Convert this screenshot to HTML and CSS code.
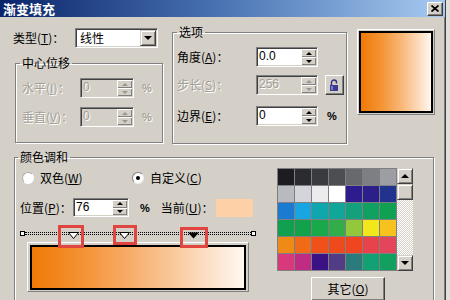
FILE: index.html
```html
<!DOCTYPE html>
<html lang="zh-CN">
<head>
  <meta charset="UTF-8">
  <title>渐变填充</title>
  <link rel="stylesheet" href="styles.css">
</head>
<body>
  <div class="window">
    <!-- Title bar -->
    <div class="titlebar">
      <span class="title">渐变填充</span>
      <span class="close">
        <svg width="8" height="7" viewBox="0 0 8 7"><path d="M0.5 0.5 L7.5 6.5 M7.5 0.5 L0.5 6.5" stroke="#000" stroke-width="1.7"/></svg>
      </span>
    </div>

    <!-- Top part -->
    <div class="top">
      <div class="left-col">
        <div class="type-row">
          <span class="label type-label">类型(<u>T</u>)：</span>
          <div class="select">
            <span>线性</span>
            <span class="drop-btn"><i class="arrow-down"></i></span>
          </div>
        </div>

        <fieldset class="group center-group">
          <legend>中心位移</legend>
          <div class="field disabled first">
            <span class="label w58">水平(<u>I</u>)：</span>
            <div class="spin-input w54">
              <span class="val">0</span>
              <span class="spinner"><span class="sbtn"><i class="arrow-up"></i></span><span class="sbtn"><i class="arrow-down"></i></span></span>
            </div>
            <span class="pct">%</span>
          </div>
          <div class="field disabled second">
            <span class="label w58">垂直(<u>V</u>)：</span>
            <div class="spin-input w54">
              <span class="val">0</span>
              <span class="spinner"><span class="sbtn"><i class="arrow-up"></i></span><span class="sbtn"><i class="arrow-down"></i></span></span>
            </div>
            <span class="pct">%</span>
          </div>
        </fieldset>
      </div>

      <fieldset class="group options-group">
        <legend>选项</legend>
        <div class="field first">
          <span class="label w79">角度(<u>A</u>)：</span>
          <div class="spin-input w62">
            <span class="val">0.0</span>
            <span class="spinner"><span class="sbtn"><i class="arrow-up"></i></span><span class="sbtn"><i class="arrow-down"></i></span></span>
          </div>
        </div>
        <div class="field disabled">
          <span class="label w79">步长(<u>S</u>)：</span>
          <div class="spin-input w62">
            <span class="val">256</span>
            <span class="spinner"><span class="sbtn"><i class="arrow-up"></i></span><span class="sbtn"><i class="arrow-down"></i></span></span>
          </div>
          <span class="lock-btn">
            <svg width="11" height="12" viewBox="0 0 11 12">
              <path d="M2.5 6 V3.5 A2.5 2.5 0 0 1 7.5 3.5 V4.5" fill="none" stroke="#2f2f7a" stroke-width="1.4"/>
              <rect x="1" y="6" width="8" height="6" fill="#3c3c90"/>
              <rect x="2" y="7" width="2" height="4" fill="#7a7ac8"/>
            </svg>
          </span>
        </div>
        <div class="field third">
          <span class="label w79">边界(<u>E</u>)：</span>
          <div class="spin-input w62">
            <span class="val">0</span>
            <span class="spinner"><span class="sbtn"><i class="arrow-up"></i></span><span class="sbtn"><i class="arrow-down"></i></span></span>
          </div>
          <span class="pct pct-wide">%</span>
        </div>
      </fieldset>

      <div class="preview-frame"><div class="preview"></div></div>
    </div>

    <!-- Color blend -->
    <fieldset class="group blend-group">
      <legend>颜色调和</legend>
      <div class="blend-body">
        <div class="blend-left">
          <div class="radio-row">
            <span class="radio-item first-radio"><span class="radio"></span><span class="rlabel">双色(<u>W</u>)</span></span>
            <span class="radio-item"><span class="radio checked"></span><span class="rlabel">自定义(<u>C</u>)</span></span>
          </div>
          <div class="pos-row">
            <span class="label w53">位置(<u>P</u>)：</span>
            <div class="spin-input w56 h19">
              <span class="val">76</span>
              <span class="spinner"><span class="sbtn"><i class="arrow-up"></i></span><span class="sbtn"><i class="arrow-down"></i></span></span>
            </div>
            <span class="pct pct-pos">%</span>
            <span class="label cur-label">当前(<u>U</u>)：</span>
            <span class="swatch"></span>
          </div>
          <div class="track">
            <span class="end"></span>
            <span class="dots"></span>
            <span class="end"></span>
            <svg class="marker" style="left:48px" width="11" height="7" viewBox="0 0 11 7"><path d="M0.5 0.5 H10.5 L5.5 6.5 Z" fill="#fff" stroke="#000"/></svg>
            <svg class="marker" style="left:99px" width="11" height="7" viewBox="0 0 11 7"><path d="M0.5 0.5 H10.5 L5.5 6.5 Z" fill="#fff" stroke="#000"/></svg>
            <svg class="marker" style="left:168px" width="11" height="7" viewBox="0 0 11 7"><path d="M0 0.5 H11 L5.5 6.5 Z" fill="#000"/></svg>
            <span class="mark-box" style="left:38px;top:0;width:26px;height:23px"></span>
            <span class="mark-box" style="left:93px;top:0;width:24px;height:20px"></span>
            <span class="mark-box" style="left:160px;top:2px;width:28px;height:21px"></span>
          </div>
          <div class="bar-frame"><div class="bar"></div></div>
        </div>

        <div class="blend-right">
          <div class="palette-box">
            <div class="palette">
              <span style="background:#1d1d21"></span><span style="background:#2a2c30"></span><span style="background:#393b3f"></span><span style="background:#4c4e52"></span><span style="background:#67696d"></span><span style="background:#7d7f84"></span><span style="background:#9c9ea3"></span>
              <span style="background:#b8bac0"></span><span style="background:#d3d5da"></span><span style="background:#ececef"></span><span style="background:#ffffff"></span><span style="background:#2e1b8e"></span><span style="background:#2c1f8a"></span><span style="background:#21328f"></span>
              <span style="background:#1b7bd0"></span><span style="background:#18a6e3"></span><span style="background:#0fa7ad"></span><span style="background:#0fa79a"></span><span style="background:#13a07a"></span><span style="background:#10a060"></span><span style="background:#10a052"></span>
              <span style="background:#11a04f"></span><span style="background:#13a24c"></span><span style="background:#19a84a"></span><span style="background:#33ac4a"></span><span style="background:#93c83d"></span><span style="background:#f1e71a"></span><span style="background:#f7c21e"></span>
              <span style="background:#f08a17"></span><span style="background:#f06a18"></span><span style="background:#f0501a"></span><span style="background:#ef4a1b"></span><span style="background:#ef4520"></span><span style="background:#e8434a"></span><span style="background:#e3455a"></span>
              <span style="background:#d8397a"></span><span style="background:#c02c84"></span><span style="background:#3a1283"></span><span style="background:#533c86"></span><span style="background:#2b7a7c"></span><span style="background:#12a172"></span><span style="background:#11a05e"></span>
            </div>
            <div class="scrollbar">
              <span class="sb-btn"><i class="arrow-up big"></i></span>
              <span class="sb-btn"></span>
              <span class="sb-track"></span>
              <span class="sb-btn"><i class="arrow-down big"></i></span>
            </div>
          </div>
          <div class="other-btn">其它(<u>O</u>)</div>
        </div>
      </div>
    </fieldset>
  </div>
</body>
</html>
```

FILE: styles.css
```css
/* General */
body {
  margin: 0;
  width: 450px;
  height: 300px;
  overflow: hidden;
  background: #e2e0dc;
  font-family: "Noto Sans CJK SC", "Liberation Sans", sans-serif;
  font-size: 12px;
  color: #000;
}

.window {
  width: 445px;
  height: 300px;
  background: #d4d0c8;
  border-right: 1px solid #404040;
  box-shadow: inset -1px 0 #808080;
  overflow: hidden;
}

/* Title bar */
.titlebar {
  height: 17px;
  display: flex;
  align-items: center;
  justify-content: space-between;
  padding: 0 2px 0 3px;
  background: linear-gradient(to right, #0a246a, #4a74b4 50%, #a6caf0);
}

.title {
  color: #fff;
  font-weight: bold;
  font-size: 13px;
  line-height: 17px;
}

.close {
  width: 16px;
  height: 14px;
  box-sizing: border-box;
  display: flex;
  align-items: center;
  justify-content: center;
  background: #d4d0c8;
  border: 1px solid;
  border-color: #fff #404040 #404040 #fff;
  box-shadow: inset -1px -1px #808080;
}

/* Shared bits */
u {
  text-underline-offset: 1px;
}

.label {
  white-space: nowrap;
  line-height: 14px;
}

.w53 { width: 53px; }
.w58 { width: 58px; }
.w79 { width: 79px; }

.arrow-up,
.arrow-down {
  display: block;
  width: 0;
  height: 0;
  border-left: 3px solid transparent;
  border-right: 3px solid transparent;
}
.arrow-up { border-bottom: 3px solid #000; }
.arrow-down { border-top: 3px solid #000; }

.arrow-up.big,
.arrow-down.big {
  border-left-width: 4px;
  border-right-width: 4px;
}
.arrow-up.big { border-bottom-width: 4px; }
.arrow-down.big { border-top-width: 4px; }

/* Top section */
.top {
  display: flex;
  align-items: flex-start;
  padding-left: 13px;
}

.left-col {
  width: 150px;
  flex: none;
}

.type-row {
  display: flex;
  align-items: center;
  height: 20px;
  margin-top: 11px;
}

.type-label {
  width: 62px;
}

.select {
  width: 83px;
  height: 20px;
  box-sizing: border-box;
  display: flex;
  align-items: center;
  justify-content: space-between;
  padding: 0 0 0 4px;
  background: #fff;
  border: 1px solid;
  border-color: #808080 #fff #fff #808080;
  box-shadow: inset 1px 1px #404040, inset -1px -1px #d4d0c8;
  line-height: 14px;
}

.drop-btn {
  width: 16px;
  height: 16px;
  margin-right: 1px;
  box-sizing: border-box;
  display: flex;
  align-items: center;
  justify-content: center;
  background: #d4d0c8;
  border: 1px solid;
  border-color: #d4d0c8 #404040 #404040 #d4d0c8;
  box-shadow: inset 1px 1px #fff, inset -1px -1px #808080;
}
.drop-btn .arrow-down {
  border-left-width: 4px;
  border-right-width: 4px;
  border-top-width: 4px;
}

/* Group boxes */
.group {
  margin: 0;
  padding: 0;
  min-width: 0;
  box-sizing: border-box;
  border: 1px solid #808080;
  box-shadow: inset 1px 1px #fff, 1px 1px #fff;
}

.group legend {
  padding: 0 2px;
  margin-left: 4px;
  line-height: 14px;
  font-size: 12px;
}

.center-group {
  width: 148px;
  height: 87px;
  margin: 8px 0 0 2px;
}

.options-group {
  flex: none;
  width: 175px;
  height: 119px;
  margin: 8px 0 0 9px;
}

.field {
  display: flex;
  align-items: center;
  height: 20px;
  margin-top: 8px;
}

.center-group .field {
  margin-left: 6px;
}
.center-group .field.second {
  margin-top: 9px;
}

.options-group .field {
  margin-left: 4px;
}
.options-group .field.third {
  margin-top: 11px;
}

.spin-input {
  height: 20px;
  flex: none;
  box-sizing: border-box;
  display: flex;
  align-items: stretch;
  justify-content: space-between;
  padding: 1px 1px 1px 2px;
  background: #fff;
  border: 1px solid;
  border-color: #808080 #fff #fff #808080;
  box-shadow: inset 1px 1px #404040, inset -1px -1px #d4d0c8;
}
.w54 { width: 54px; }
.w56 { width: 56px; }
.w62 { width: 62px; }
.h19 { height: 19px; }

.val {
  font-family: "Liberation Sans", sans-serif;
  font-size: 12px;
  line-height: 14px;
}

.spinner {
  width: 15px;
  display: flex;
  flex-direction: column;
}

.sbtn {
  flex: 1;
  display: flex;
  align-items: center;
  justify-content: center;
  background: #d4d0c8;
  box-shadow: inset 1px 1px #fff, inset -1px -1px #808080;
}

.pct {
  margin-left: 8px;
  font-size: 11px;
  font-family: "Liberation Sans", sans-serif;
  font-weight: bold;
}
.pct-wide {
  margin-left: 9px;
}

.disabled .label,
.disabled .val,
.disabled .pct {
  color: #a39f97;
  text-shadow: 1px 1px #fff;
}
.disabled .spin-input {
  background: #d4d0c8;
}
.disabled .arrow-up { border-bottom-color: #9a968e; }
.disabled .arrow-down { border-top-color: #9a968e; }

.lock-btn {
  width: 19px;
  height: 20px;
  margin-left: 7px;
  box-sizing: border-box;
  display: flex;
  align-items: center;
  justify-content: center;
  background: #d4d0c8;
  border: 1px solid;
  border-color: #fff #404040 #404040 #fff;
  box-shadow: inset -1px -1px #808080;
}

.preview-frame {
  flex: none;
  width: 78px;
  height: 86px;
  margin: 12px 0 0 10px;
  box-sizing: border-box;
  padding: 1px;
  border: 1px solid;
  border-color: #fff #808080 #808080 #fff;
}

.preview {
  height: 100%;
  box-sizing: border-box;
  border: 2px solid #000;
  background: linear-gradient(to right, #f07a06, #f49535 30%, #f8b370 55%, #fcd7b6 80%, #fff7f0);
}

/* Colour blend */
.blend-group {
  width: 420px;
  height: 170px;
  margin: 6px 0 0 14px;
}
.blend-group legend {
  margin-left: 3px;
}

.blend-body {
  display: grid;
  grid-template-columns: 248px 136px;
  column-gap: 14px;
  align-items: start;
}

.blend-left {
  padding-left: 5px;
  overflow: hidden;
}

.radio-row {
  display: flex;
  align-items: center;
  height: 14px;
  margin: 7px 0 0 2px;
}

.radio-item {
  display: flex;
  align-items: center;
}
.first-radio {
  width: 110px;
}

.radio {
  width: 12px;
  height: 12px;
  box-sizing: border-box;
  border-radius: 50%;
  background: #fff;
  border: 1px solid;
  border-color: #b0aca4 #fff #fff #b0aca4;
  display: flex;
  align-items: center;
  justify-content: center;
}
.radio.checked {
  border-color: #808080 #eee #eee #808080;
}
.radio.checked::after {
  content: "";
  width: 4px;
  height: 4px;
  border-radius: 50%;
  background: #000;
}

.rlabel {
  margin-left: 6px;
  line-height: 14px;
}

.pos-row {
  display: flex;
  align-items: center;
  height: 19px;
  margin-top: 13px;
}

.pct-pos {
  margin-left: 11px;
}

.cur-label {
  width: 55px;
  margin-left: 11px;
}

.swatch {
  flex: none;
  width: 37px;
  height: 18px;
  background: #fdd0a8;
}

/* Gradient slider */
.track {
  position: relative;
  z-index: 1;
  width: 236px;
  height: 16px;
  margin-top: 8px;
  display: flex;
  align-items: center;
}

.end {
  width: 5px;
  height: 5px;
  box-sizing: border-box;
  border: 1px solid #000;
  background: #fff;
}

.dots {
  flex: 1;
  height: 1px;
  border-top: 1px dotted #000;
  border-bottom: 1px dotted #000;
}

.marker {
  position: absolute;
  top: 7px;
}

.mark-box {
  position: absolute;
  box-sizing: border-box;
  border: 3px solid #e0453f;
}

.bar-frame {
  width: 222px;
  height: 50px;
  margin: 1px 0 0 7px;
  box-sizing: border-box;
  padding: 2px 2px 1px 2px;
  border: 1px solid;
  border-color: #fff #808080 #808080 #fff;
}

.bar {
  height: 100%;
  box-sizing: border-box;
  border: 2px solid #000;
  background: linear-gradient(to right, #f07a08, #f38e2c 20%, #f7ab66 45%, #fad0a9 72%, #fff8f2);
}

/* Palette */
.blend-right {
  margin-top: 4px;
}

.palette-box {
  display: flex;
}

.palette {
  display: grid;
  grid-template-columns: repeat(7, 16px);
  grid-auto-rows: 16px;
  gap: 1px;
  padding: 1px;
  background: #7f7f82;
}

.scrollbar {
  width: 16px;
  display: flex;
  flex-direction: column;
  background: repeating-conic-gradient(#fff 0 25%, #d4d0c8 0 50%) 0 0 / 2px 2px;
}

.sb-btn {
  height: 16px;
  box-sizing: border-box;
  display: flex;
  align-items: center;
  justify-content: center;
  background: #d4d0c8;
  border: 1px solid;
  border-color: #d4d0c8 #404040 #404040 #d4d0c8;
  box-shadow: inset 1px 1px #fff, inset -1px -1px #808080;
}

.sb-track {
  flex: 1;
}

.other-btn {
  width: 74px;
  height: 24px;
  margin: 6px 0 0 34px;
  box-sizing: border-box;
  display: flex;
  align-items: center;
  justify-content: center;
  background: #d4d0c8;
  border: 1px solid;
  border-color: #fff #404040 #404040 #fff;
  box-shadow: inset -1px -1px #808080;
  line-height: 14px;
}
```
